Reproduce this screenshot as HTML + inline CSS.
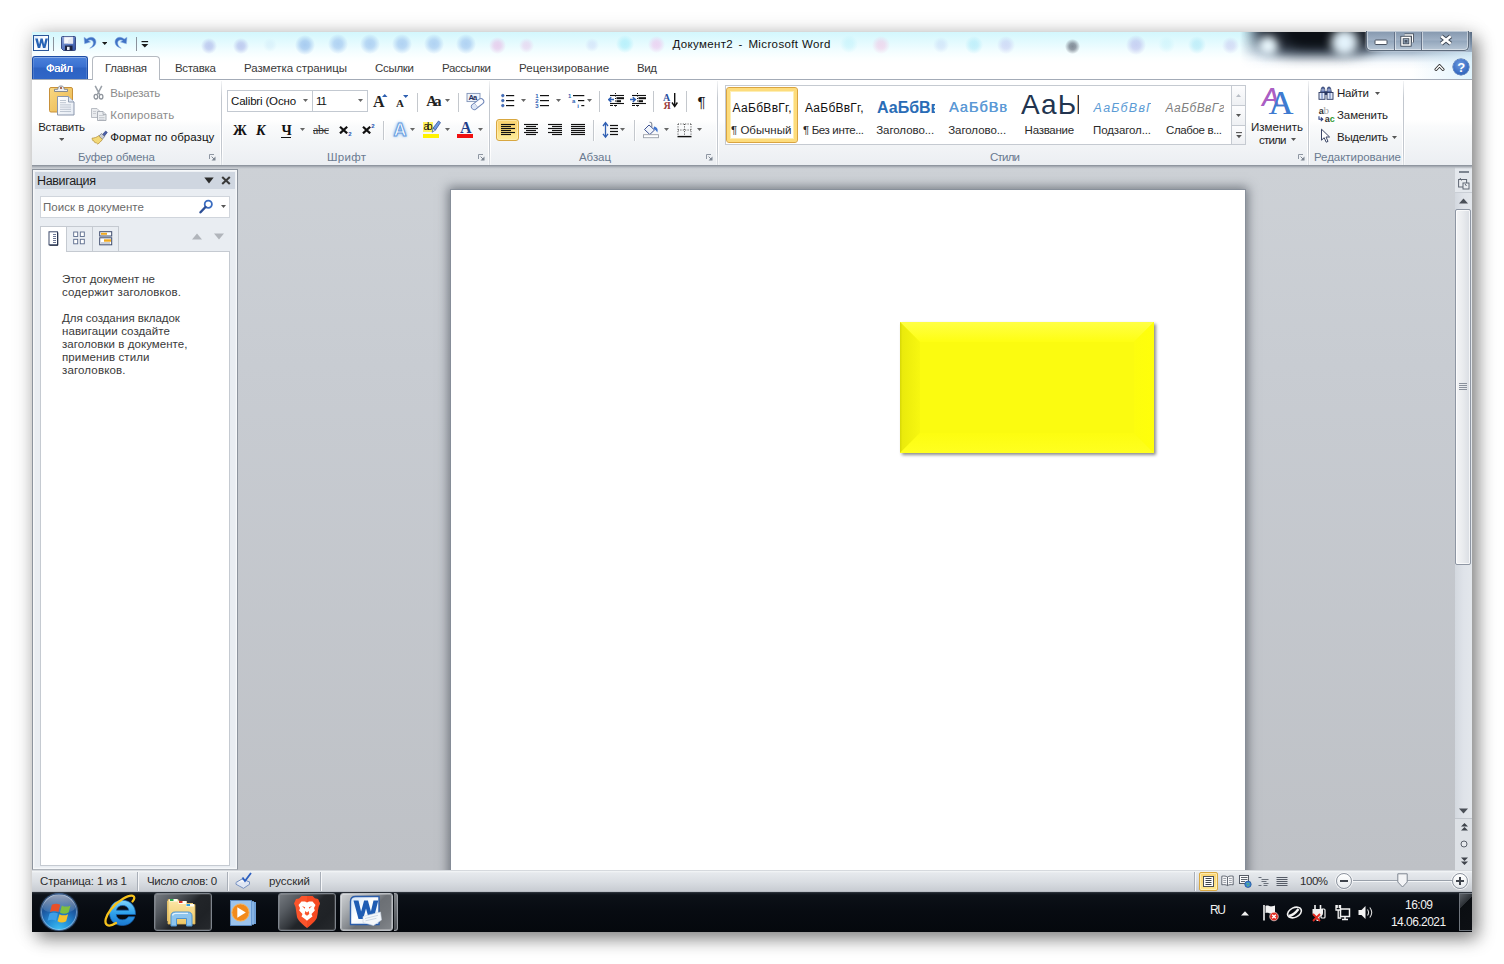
<!DOCTYPE html>
<html lang="ru"><head><meta charset="utf-8"><title>Документ2 - Microsoft Word</title>
<style>
html,body{margin:0;padding:0;}
body{width:1504px;height:964px;overflow:hidden;background:#fff;position:relative;font-family:"Liberation Sans",sans-serif;font-size:12px;}
.b{position:absolute;box-sizing:border-box;display:block;}
.t{position:absolute;white-space:nowrap;line-height:1;display:block;}

#shadow{left:32px;top:32px;width:1440px;height:900px;box-shadow:6px 7px 16px rgba(0,0,0,.42),0 1px 20px rgba(0,0,0,.17);background:#fff;}
#title{left:32px;top:32px;width:1440px;height:48px;overflow:hidden;
 background:linear-gradient(#d3f7fd 0,#e1fafe 9px,#f1fdff 18px,#fcffff 26px,#ffffff 32px,#ffffff 48px);}
.dot{position:absolute;border-radius:50%;}
#ribbon{left:32px;top:79px;width:1440px;height:86px;background:linear-gradient(#ffffff 0,#ffffff 40px,#fafbfc 46px,#f3f5f7 62px,#ebeef2 86px);border-top:1px solid #a3abb7;}
#work{left:32px;top:165px;width:1440px;height:705px;background:linear-gradient(#cdd1d6 0,#c8ccd2 200px,#bec1c6 705px);overflow:hidden;}
#workshadow{left:32px;top:165px;width:1440px;height:4px;background:linear-gradient(#868d97 0,#9aa0a9 1px,#b3b8bf 2px,rgba(190,195,201,.6) 3px,rgba(200,204,210,0) 4px);}
#status{left:32px;top:870px;width:1440px;height:22px;background:linear-gradient(#b8bdc4 0,#f4f6f8 1px,#e6e9ed 3px,#d9dde2 12px,#c8ccd2 21px,#aab0b8 22px);}
#task{left:32px;top:892px;width:1440px;height:40px;background:linear-gradient(#3a4048 0,#1b2129 1px,#0c1118 3px,#070b11 20px,#05080d 40px);}


#cap{left:1366px;top:31px;width:103px;height:20px;border:1px solid #5d6b7c;border-top:none;border-radius:0 0 5px 5px;
 background:linear-gradient(#8497ae 0,#9fb0c4 9px,#93a6bc 10px,#b3c2d2 18px);box-shadow:0 0 2px rgba(255,255,255,.8),inset 0 0 0 1px rgba(255,255,255,.45);}

#help{left:1453px;top:59px;width:16px;height:16px;border-radius:50%;background:radial-gradient(circle at 45% 35%,#6f9be0 0,#3b6fc4 60%,#2a58a8 100%);box-shadow:0 0 0 .5px #2c5196;}

#file{left:32px;top:56px;width:56px;height:23px;border-radius:3px 3px 0 0;border:1px solid #1d4ea5;border-bottom:none;
 background:linear-gradient(#4a81db 0,#3a70d0 10px,#2d62c2 11px,#3067c8 24px);box-shadow:inset 0 1px 0 rgba(255,255,255,.35),inset 1px 0 0 rgba(255,255,255,.15),inset -1px 0 0 rgba(255,255,255,.15);}
#home{left:92px;top:56px;width:68px;height:24px;border:1px solid #b5bac1;border-bottom:none;border-radius:4px 4px 0 0;background:#fff;}

.combo{background:#fff;border:1px solid #c3c9d1;}
#alsel{left:496px;top:119px;width:23px;height:22px;border:1px solid #d8a740;border-radius:3px;background:linear-gradient(#fcd472 0,#fcd877 45%,#fde387 60%,#fdec9b 100%);box-shadow:inset 0 0 0 1px rgba(255,240,190,.6);}

#gal{left:725px;top:85px;width:507px;height:60px;background:#fff;border:1px solid #c5cad1;}
#galsel{left:726px;top:87px;width:72px;height:56px;border:1px solid #d9a440;border-radius:3px;background:#fff;box-shadow:inset 0 0 0 3px #fddc7c,inset 0 0 0 4px #fdeeb5;}
.gsb{background:linear-gradient(#fdfdfe,#eef0f3);border:1px solid #c5cad1;}


#nav{left:32px;top:169px;width:206px;height:701px;background:#e9edf2;border:1px solid #8d949e;border-bottom:1px solid #aeb3ba;box-shadow:inset 0 0 0 1px #f6f8fa,inset 0 0 0 2px #eef1f5;}
#navhead{left:35px;top:172px;width:200px;height:17px;background:#cfd6e0;}
#navsearch{left:40px;top:196px;width:190px;height:22px;background:#fff;border:1px solid #d0d5dc;}
#navbody{left:40px;top:251px;width:190px;height:615px;background:#fff;border:1px solid #c5cad1;}
.ntab{border:1px solid #c5cad1;border-bottom:none;background:#e9edf2;}
#page{left:451px;top:190px;width:794px;height:700px;background:#fff;box-shadow:0 0 0 1px rgba(132,140,152,.75),0 0 10px 3px rgba(60,66,76,.6);}
#shape{left:900px;top:322px;width:253.5px;height:131px;background:#fbfb10;box-shadow:2px 2px 3px rgba(0,0,0,.45);overflow:hidden;}
#vsb{left:1455px;top:166px;width:17px;height:704px;background:linear-gradient(90deg,#d3d8df 0,#dfe3e9 50%,#e3e7ec 100%);}
#vthumb{left:1455px;top:209px;width:16px;height:356px;border:1px solid #8e96a3;border-radius:2px;background:linear-gradient(90deg,#f4f5f7 0,#e9ebee 50%,#d9dde3 100%);box-shadow:inset 0 0 0 1px rgba(255,255,255,.7);}

#vsel{left:1199px;top:872px;width:19px;height:19px;border:1px solid #d8a740;border-radius:2px;background:linear-gradient(#fcd574,#fde790);box-shadow:inset 0 0 0 1px rgba(255,244,200,.7);}
.zc{width:16px;height:16px;border-radius:50%;border:1px solid #8d949f;background:linear-gradient(#ffffff,#e7eaee);box-shadow:0 0 0 1px rgba(255,255,255,.7);}

.tb{border:1px solid #7e848c;border-radius:3px;background:linear-gradient(135deg,#767b81 0,#555a60 24%,#33373c 44%,#222529 52%,#1f2226 75%,#26292d 100%);box-shadow:inset 0 0 0 1px rgba(255,255,255,.12);}
.tba{border:1px solid #b9bdc2;border-radius:3px;background:linear-gradient(135deg,#cdd0d3 0,#a8acb0 25%,#84888d 45%,#6c7075 54%,#71757a 75%,#83878c 100%);box-shadow:inset 0 0 0 1px rgba(255,255,255,.3);}
#orb{left:41px;top:894px;width:36px;height:36px;border-radius:50%;background:radial-gradient(circle at 50% 100%,#3fc0f2 0,#2590d8 28%,#1d5ea8 55%,#173a72 80%,#12305f 100%);box-shadow:0 0 0 1px #3d5f8c,0 0 3px rgba(120,170,230,.6),inset 0 0 0 1px rgba(190,220,250,.5);overflow:hidden;}
#orb i{position:absolute;left:2px;top:1px;width:32px;height:17px;border-radius:16px 16px 10px 10px/16px 16px 5px 5px;background:linear-gradient(rgba(255,255,255,.55),rgba(255,255,255,.1));}

</style></head><body>
<div class="b" id="shadow"></div>
<div class="b" id="title"><i class="dot" style="left:168.5px;top:5.5px;width:16px;height:16px;background:radial-gradient(circle,rgba(180,192,236,0.8) 0,rgba(180,192,236,0.68) 30%,rgba(180,192,236,0.32) 52%,rgba(180,192,236,0) 72%)"></i><i class="dot" style="left:200.5px;top:5.5px;width:16px;height:16px;background:radial-gradient(circle,rgba(180,192,236,0.8) 0,rgba(180,192,236,0.68) 30%,rgba(180,192,236,0.32) 52%,rgba(180,192,236,0) 72%)"></i><i class="dot" style="left:231px;top:6px;width:14px;height:14px;background:radial-gradient(circle,rgba(207,234,248,0.5) 0,rgba(207,234,248,0.425) 30%,rgba(207,234,248,0.2) 52%,rgba(207,234,248,0) 72%)"></i><i class="dot" style="left:262.7px;top:2.5px;width:20px;height:20px;background:radial-gradient(circle,rgba(156,195,238,0.85) 0,rgba(156,195,238,0.7225) 30%,rgba(156,195,238,0.34) 52%,rgba(156,195,238,0) 72%)"></i><i class="dot" style="left:295.6px;top:2px;width:20px;height:20px;background:radial-gradient(circle,rgba(164,201,240,0.82) 0,rgba(164,201,240,0.697) 30%,rgba(164,201,240,0.328) 52%,rgba(164,201,240,0) 72%)"></i><i class="dot" style="left:327.5px;top:2px;width:20px;height:20px;background:radial-gradient(circle,rgba(164,201,240,0.82) 0,rgba(164,201,240,0.697) 30%,rgba(164,201,240,0.328) 52%,rgba(164,201,240,0) 72%)"></i><i class="dot" style="left:359.8px;top:2px;width:20px;height:20px;background:radial-gradient(circle,rgba(164,201,240,0.82) 0,rgba(164,201,240,0.697) 30%,rgba(164,201,240,0.328) 52%,rgba(164,201,240,0) 72%)"></i><i class="dot" style="left:391.7px;top:2px;width:20px;height:20px;background:radial-gradient(circle,rgba(164,201,240,0.82) 0,rgba(164,201,240,0.697) 30%,rgba(164,201,240,0.328) 52%,rgba(164,201,240,0) 72%)"></i><i class="dot" style="left:424.2px;top:2px;width:20px;height:20px;background:radial-gradient(circle,rgba(164,201,240,0.82) 0,rgba(164,201,240,0.697) 30%,rgba(164,201,240,0.328) 52%,rgba(164,201,240,0) 72%)"></i><i class="dot" style="left:456.5px;top:5px;width:17px;height:17px;background:radial-gradient(circle,rgba(230,198,234,0.8) 0,rgba(230,198,234,0.68) 30%,rgba(230,198,234,0.32) 52%,rgba(230,198,234,0) 72%)"></i><i class="dot" style="left:487.1px;top:6px;width:15px;height:15px;background:radial-gradient(circle,rgba(230,208,238,0.7) 0,rgba(230,208,238,0.595) 30%,rgba(230,208,238,0.28) 52%,rgba(230,208,238,0) 72%)"></i><i class="dot" style="left:553px;top:6px;width:14px;height:14px;background:radial-gradient(circle,rgba(205,220,247,0.6) 0,rgba(205,220,247,0.51) 30%,rgba(205,220,247,0.24) 52%,rgba(205,220,247,0) 72%)"></i><i class="dot" style="left:584px;top:3px;width:18px;height:18px;background:radial-gradient(circle,rgba(174,238,250,0.8) 0,rgba(174,238,250,0.68) 30%,rgba(174,238,250,0.32) 52%,rgba(174,238,250,0) 72%)"></i><i class="dot" style="left:615.5px;top:4px;width:17px;height:17px;background:radial-gradient(circle,rgba(236,204,240,0.8) 0,rgba(236,204,240,0.68) 30%,rgba(236,204,240,0.32) 52%,rgba(236,204,240,0) 72%)"></i><i class="dot" style="left:807.5px;top:3px;width:18px;height:18px;background:radial-gradient(circle,rgba(184,240,250,0.5) 0,rgba(184,240,250,0.425) 30%,rgba(184,240,250,0.2) 52%,rgba(184,240,250,0) 72%)"></i><i class="dot" style="left:839.5px;top:4px;width:18px;height:18px;background:radial-gradient(circle,rgba(240,196,228,0.6) 0,rgba(240,196,228,0.51) 30%,rgba(240,196,228,0.24) 52%,rgba(240,196,228,0) 72%)"></i><i class="dot" style="left:900.6px;top:5px;width:16px;height:16px;background:radial-gradient(circle,rgba(194,214,245,0.5) 0,rgba(194,214,245,0.425) 30%,rgba(194,214,245,0.2) 52%,rgba(194,214,245,0) 72%)"></i><i class="dot" style="left:933px;top:3.5px;width:18px;height:18px;background:radial-gradient(circle,rgba(168,232,248,0.6) 0,rgba(168,232,248,0.51) 30%,rgba(168,232,248,0.24) 52%,rgba(168,232,248,0) 72%)"></i><i class="dot" style="left:965px;top:4px;width:18px;height:18px;background:radial-gradient(circle,rgba(194,200,242,0.6) 0,rgba(194,200,242,0.51) 30%,rgba(194,200,242,0.24) 52%,rgba(194,200,242,0) 72%)"></i><i class="dot" style="left:1032.5px;top:6.5px;width:15px;height:15px;background:radial-gradient(circle,rgba(95,103,117,0.75) 0,rgba(95,103,117,0.6375) 30%,rgba(95,103,117,0.3) 52%,rgba(95,103,117,0) 72%)"></i><i class="dot" style="left:1094px;top:3px;width:20px;height:20px;background:radial-gradient(circle,rgba(182,186,236,0.65) 0,rgba(182,186,236,0.5525) 30%,rgba(182,186,236,0.26) 52%,rgba(182,186,236,0) 72%)"></i><i class="dot" style="left:1125.5px;top:3.5px;width:17px;height:17px;background:radial-gradient(circle,rgba(196,241,250,0.5) 0,rgba(196,241,250,0.425) 30%,rgba(196,241,250,0.2) 52%,rgba(196,241,250,0) 72%)"></i><i class="dot" style="left:1156px;top:3.5px;width:18px;height:18px;background:radial-gradient(circle,rgba(168,230,246,0.6) 0,rgba(168,230,246,0.51) 30%,rgba(168,230,246,0.24) 52%,rgba(168,230,246,0) 72%)"></i><i class="dot" style="left:1189.5px;top:5px;width:17px;height:17px;background:radial-gradient(circle,rgba(198,202,240,0.6) 0,rgba(198,202,240,0.51) 30%,rgba(198,202,240,0.24) 52%,rgba(198,202,240,0) 72%)"></i><i class="dot" style="left:1208px;top:0;width:232px;height:40px;border-radius:0;background:linear-gradient(rgba(84,102,126,.97) 0,rgba(112,132,158,.92) 12px,rgba(140,160,184,.85) 19px,rgba(185,202,220,.62) 25px,rgba(228,238,248,.32) 31px,rgba(255,255,255,0) 37px);-webkit-mask-image:linear-gradient(90deg,transparent 0,#000 26px);mask-image:linear-gradient(90deg,transparent 0,#000 26px)"></i><i class="dot" style="left:1226px;top:-22px;width:122px;height:44px;background:#1c222b;border-radius:35%;filter:blur(7px)"></i><i class="dot" style="left:1254px;top:-20px;width:62px;height:34px;background:#0b0f15;border-radius:35%;filter:blur(4px)"></i><i class="dot" style="left:1226px;top:4px;width:20px;height:20px;background:#eaf8fe;filter:blur(4px)"></i><i class="dot" style="left:1299px;top:-3px;width:27px;height:27px;background:#e4f3fc;filter:blur(5px)"></i><i class="dot" style="left:1380px;top:20px;width:60px;height:28px;border-radius:0;background:linear-gradient(90deg,rgba(215,240,252,0),rgba(215,240,252,.75))"></i></div>
<div class="b" id="ribbon"></div>
<div class="b" id="work"></div>
<div class="b" id="workshadow"></div>
<svg class="b" style="left:33px;top:35px;" width="16" height="16" viewBox="0 0 16 16"><defs><linearGradient id="wg" x1="0" y1="0" x2="1" y2="1"><stop offset="0" stop-color="#dcebfb"/><stop offset=".5" stop-color="#ffffff"/><stop offset="1" stop-color="#e8f0fa"/></linearGradient></defs>
<rect x=".5" y=".5" width="15" height="15" fill="url(#wg)" stroke="#2a5699" stroke-width="1"/>
<path d="M2.2 3.6h2.6l1.3 6 1.4-6h2.2l1.4 6 1.3-6h2.5l-2.5 9.4H10L8.6 7.4 7.2 13H4.8z" fill="#2763b5"/></svg>
<div class="b " style="left:53px;top:37px;width:1px;height:14px;background:#8a929c;"></div>
<svg class="b" style="left:61px;top:36px;" width="15" height="15" viewBox="0 0 15 15"><defs><linearGradient id="sv" x1="0" y1="0" x2="1" y2="1"><stop offset="0" stop-color="#8ba4dc"/><stop offset="1" stop-color="#2b4fa3"/></linearGradient></defs>
<path d="M.5 1.5a1 1 0 0 1 1-1h12a1 1 0 0 1 1 1v12a1 1 0 0 1-1 1h-11l-2-2z" fill="url(#sv)" stroke="#2e3f7a" stroke-width=".9"/>
<rect x="3" y="1" width="9" height="6.6" fill="#f6f8fc"/><path d="M3 1h9v6.600H3z" fill="none" stroke="#b8c2dc" stroke-width=".5"/>
<path d="M7 4l5-3v6.600H7z" fill="#dfe4ef" opacity=".7"/>
<rect x="4" y="9.600" width="7.500" height="4.900" fill="#1b2340"/><rect x="6" y="10.800" width="2.600" height="3.200" fill="#e8ecf4"/></svg>
<svg class="b" style="left:83px;top:36px;" width="14" height="13" viewBox="0 0 14 13"><path d="M1 1.200l.6 6.600 6-1.800-2.300-1.500c2.200-1.300 5-.3 5 2.500 0 2.200-1.500 3.900-3.600 5.200 4-.9 6.300-3.400 6.300-6.300C13 1.600 8 -.4 3.700 2.900z" fill="#3f72c4" stroke="#8fb2e6" stroke-width=".5"/></svg>
<svg class="b" style="left:101.8px;top:41.7px;" width="5.4" height="3" viewBox="0 0 5.4 3"><path d="M0 0H5.4 L2.7 3Z" fill="#1a1a1a"/></svg>
<svg class="b" style="left:114px;top:36px;" width="14" height="13" viewBox="0 0 14 13"><path d="M13 1.200l-.6 6.600-6-1.800 2.300-1.500c-2.200-1.300-5-.3-5 2.500 0 2.200 1.500 3.900 3.600 5.200C3.300 11.300 1 8.800 1 5.900 1 1.600 6 -.4 10.300 2.900z" fill="#3f72c4" stroke="#8fb2e6" stroke-width=".5"/></svg>
<div class="b " style="left:136px;top:37px;width:1px;height:14px;background:#8a929c;"></div>
<svg class="b" style="left:141px;top:40px;" width="8" height="8" viewBox="0 0 8 8"><rect x=".5" y="1" width="6.600" height="1.200" fill="#1a1a1a"/><path d="M.3 4h7L3.800 7.400z" fill="#1a1a1a"/></svg>
<span class="t " style="left:672.6px;top:39px;font-size:11.5px;color:#111;letter-spacing:0.328px;">Документ2</span>
<span class="t " style="left:738.6px;top:39px;font-size:11.5px;color:#111;">-</span>
<span class="t " style="left:748.4px;top:39px;font-size:11.5px;color:#111;letter-spacing:0.375px;">Microsoft Word</span>
<div class="b" id="cap"></div>
<div class="b " style="left:1394px;top:32px;width:1px;height:18px;background:#66748a;"></div>
<div class="b " style="left:1395px;top:32px;width:1px;height:18px;background:rgba(255,255,255,.5);"></div>
<div class="b " style="left:1421px;top:32px;width:1px;height:18px;background:#66748a;"></div>
<div class="b " style="left:1422px;top:32px;width:1px;height:18px;background:rgba(255,255,255,.5);"></div>
<svg class="b" style="left:1374px;top:39px;" width="14" height="7" viewBox="0 0 14 7"><rect x="1" y="1" width="12" height="4.500" rx=".8" fill="#fff" stroke="#4a5361" stroke-width="1"/></svg>
<svg class="b" style="left:1400px;top:33px;" width="14" height="14" viewBox="0 0 14 14"><path d="M4.500 2h8v7.500" fill="none" stroke="#3f4856" stroke-width="3"/><path d="M4.500 2h8v7.500" fill="none" stroke="#fff" stroke-width="1.300"/>
<rect x="2" y="4.500" width="8" height="7.500" fill="none" stroke="#3f4856" stroke-width="3.200"/><rect x="2" y="4.500" width="8" height="7.500" fill="none" stroke="#fff" stroke-width="1.500"/>
<rect x="4.600" y="7" width="2.800" height="2.600" fill="#4d5766"/></svg>
<svg class="b" style="left:1439px;top:34px;" width="14" height="12" viewBox="0 0 14 12"><path d="M2.300 2.200l9.400 7.600M11.700 2.200l-9.400 7.600" stroke="#3f4856" stroke-width="4.600"/><path d="M2.300 2.200l9.400 7.600M11.700 2.200l-9.400 7.600" stroke="#fff" stroke-width="2.700"/></svg>
<svg class="b" style="left:1434px;top:63px;" width="11" height="9" viewBox="0 0 11 9"><path d="M2 6.500l3.500-3.800 3.500 3.800" fill="none" stroke="#2a2a2a" stroke-width="3" stroke-linejoin="round" stroke-linecap="round"/><path d="M2 6.500l3.500-3.800 3.500 3.800" fill="none" stroke="#fff" stroke-width="1.300" stroke-linejoin="round" stroke-linecap="round"/></svg>
<div class="b" id="help"></div>
<span class="t " style="left:1457.2px;top:61px;font-size:13px;color:#fff;font-weight:bold;">?</span>
<div class="b" id="file"></div>
<div class="b" id="home"></div>
<span class="t " style="left:46.0px;top:63px;font-size:11.5px;color:#fff;letter-spacing:-0.417px;text-shadow:0 0 .6px #fff;">Файл</span>
<span class="t " style="left:105.0px;top:63px;font-size:11.5px;color:#3a3a3a;letter-spacing:-0.292px;">Главная</span>
<span class="t " style="left:175.0px;top:63px;font-size:11.5px;color:#3a3a3a;letter-spacing:-0.312px;">Вставка</span>
<span class="t " style="left:244.0px;top:63px;font-size:11.5px;color:#3a3a3a;letter-spacing:-0.086px;">Разметка страницы</span>
<span class="t " style="left:375.0px;top:63px;font-size:11.5px;color:#3a3a3a;letter-spacing:-0.300px;">Ссылки</span>
<span class="t " style="left:442.0px;top:63px;font-size:11.5px;color:#3a3a3a;letter-spacing:-0.375px;">Рассылки</span>
<span class="t " style="left:519.0px;top:63px;font-size:11.5px;color:#3a3a3a;letter-spacing:0.096px;">Рецензирование</span>
<span class="t " style="left:637.0px;top:63px;font-size:11.5px;color:#3a3a3a;letter-spacing:-0.375px;">Вид</span>
<div class="b " style="left:220px;top:81px;width:1px;height:84px;background:linear-gradient(rgba(255,255,255,.2),#fff 20%,#fff 85%,rgba(255,255,255,.4));"></div>
<div class="b " style="left:221px;top:81px;width:1px;height:84px;background:linear-gradient(rgba(196,201,208,.2),#c3c8cf 20%,#c3c8cf 85%,rgba(196,201,208,.4));"></div>
<div class="b " style="left:222px;top:81px;width:1px;height:84px;background:linear-gradient(rgba(255,255,255,.2),#fff 20%,#fff 85%,rgba(255,255,255,.4));"></div>
<div class="b " style="left:488px;top:81px;width:1px;height:84px;background:linear-gradient(rgba(255,255,255,.2),#fff 20%,#fff 85%,rgba(255,255,255,.4));"></div>
<div class="b " style="left:489px;top:81px;width:1px;height:84px;background:linear-gradient(rgba(196,201,208,.2),#c3c8cf 20%,#c3c8cf 85%,rgba(196,201,208,.4));"></div>
<div class="b " style="left:490px;top:81px;width:1px;height:84px;background:linear-gradient(rgba(255,255,255,.2),#fff 20%,#fff 85%,rgba(255,255,255,.4));"></div>
<div class="b " style="left:716px;top:81px;width:1px;height:84px;background:linear-gradient(rgba(255,255,255,.2),#fff 20%,#fff 85%,rgba(255,255,255,.4));"></div>
<div class="b " style="left:717px;top:81px;width:1px;height:84px;background:linear-gradient(rgba(196,201,208,.2),#c3c8cf 20%,#c3c8cf 85%,rgba(196,201,208,.4));"></div>
<div class="b " style="left:718px;top:81px;width:1px;height:84px;background:linear-gradient(rgba(255,255,255,.2),#fff 20%,#fff 85%,rgba(255,255,255,.4));"></div>
<div class="b " style="left:1307px;top:81px;width:1px;height:84px;background:linear-gradient(rgba(255,255,255,.2),#fff 20%,#fff 85%,rgba(255,255,255,.4));"></div>
<div class="b " style="left:1308px;top:81px;width:1px;height:84px;background:linear-gradient(rgba(196,201,208,.2),#c3c8cf 20%,#c3c8cf 85%,rgba(196,201,208,.4));"></div>
<div class="b " style="left:1309px;top:81px;width:1px;height:84px;background:linear-gradient(rgba(255,255,255,.2),#fff 20%,#fff 85%,rgba(255,255,255,.4));"></div>
<div class="b " style="left:1402px;top:81px;width:1px;height:84px;background:linear-gradient(rgba(255,255,255,.2),#fff 20%,#fff 85%,rgba(255,255,255,.4));"></div>
<div class="b " style="left:1403px;top:81px;width:1px;height:84px;background:linear-gradient(rgba(196,201,208,.2),#c3c8cf 20%,#c3c8cf 85%,rgba(196,201,208,.4));"></div>
<div class="b " style="left:1404px;top:81px;width:1px;height:84px;background:linear-gradient(rgba(255,255,255,.2),#fff 20%,#fff 85%,rgba(255,255,255,.4));"></div>
<span class="t " style="left:78.0px;top:152px;font-size:11.5px;color:#6a7a90;letter-spacing:-0.114px;">Буфер обмена</span>
<span class="t " style="left:327.0px;top:152px;font-size:11.5px;color:#6a7a90;letter-spacing:0.281px;">Шрифт</span>
<span class="t " style="left:579.0px;top:152px;font-size:11.5px;color:#6a7a90;letter-spacing:-0.062px;">Абзац</span>
<span class="t " style="left:990.0px;top:152px;font-size:11.5px;color:#6a7a90;letter-spacing:-0.781px;">Стили</span>
<span class="t " style="left:1314.0px;top:152px;font-size:11.5px;color:#6a7a90;letter-spacing:-0.048px;">Редактирование</span>
<svg class="b" style="left:209px;top:154px;" width="7" height="7" viewBox="0 0 7 7"><path d="M.5 5V.5H5" fill="none" stroke="#8e96a2" stroke-width="1"/><path d="M6.500 2.500v4h-4z" fill="#7d8591"/><path d="M2.600 2.600l2.400 2.400" stroke="#7d8591" stroke-width="1"/></svg>
<svg class="b" style="left:478px;top:154px;" width="7" height="7" viewBox="0 0 7 7"><path d="M.5 5V.5H5" fill="none" stroke="#8e96a2" stroke-width="1"/><path d="M6.500 2.500v4h-4z" fill="#7d8591"/><path d="M2.600 2.600l2.400 2.400" stroke="#7d8591" stroke-width="1"/></svg>
<svg class="b" style="left:705.5px;top:154px;" width="7" height="7" viewBox="0 0 7 7"><path d="M.5 5V.5H5" fill="none" stroke="#8e96a2" stroke-width="1"/><path d="M6.500 2.500v4h-4z" fill="#7d8591"/><path d="M2.600 2.600l2.400 2.400" stroke="#7d8591" stroke-width="1"/></svg>
<svg class="b" style="left:1297.5px;top:154px;" width="7" height="7" viewBox="0 0 7 7"><path d="M.5 5V.5H5" fill="none" stroke="#8e96a2" stroke-width="1"/><path d="M6.500 2.500v4h-4z" fill="#7d8591"/><path d="M2.600 2.600l2.400 2.400" stroke="#7d8591" stroke-width="1"/></svg>
<svg class="b" style="left:47px;top:84px;" width="30" height="33" viewBox="0 0 30 33"><defs><linearGradient id="cb" x1="0" y1="0" x2="1" y2="1"><stop offset="0" stop-color="#f9d983"/><stop offset="1" stop-color="#eab54c"/></linearGradient>
<linearGradient id="pp" x1="0" y1="0" x2="1" y2="1"><stop offset="0" stop-color="#ffffff"/><stop offset="1" stop-color="#e4eaf3"/></linearGradient></defs>
<rect x="2.500" y="3.500" width="23" height="24.500" rx="1.500" fill="url(#cb)" stroke="#c8913a" stroke-width="1"/>
<path d="M7.500 7.500v-2.200h3.200c.3-2.300 1.300-3.300 3.300-3.300s3 1 3.300 3.300h3.200v2.200z" fill="#eef0f3" stroke="#7a818c" stroke-width=".9"/>
<circle cx="14" cy="4" r="1.100" fill="#9a4a33"/>
<path d="M10.500 12.500h11l5.500 5.500v13h-16.500z" fill="url(#pp)" stroke="#8b97ad" stroke-width="1"/>
<path d="M21.500 12.500v5.500h5.500" fill="#dfe6f1" stroke="#8b97ad" stroke-width=".9"/>
<path d="M13 16.500h6M13 18.700h6M13 20.900h11M13 23.100h11M13 25.300h11M13 27.500h11" stroke="#b7bfcc" stroke-width=".9"/></svg>
<span class="t " style="left:38.2px;top:122px;font-size:11.5px;color:#1e1e1e;letter-spacing:-0.279px;">Вставить</span>
<svg class="b" style="left:58.75px;top:138.1px;" width="5.5" height="3" viewBox="0 0 5.5 3"><path d="M0 0H5.5 L2.75 3Z" fill="#555"/></svg>
<svg class="b" style="left:93px;top:85px;" width="11" height="15" viewBox="0 0 11 15"><path d="M2.200 .8L6.700 9.600M8.800 .8L4.300 9.600" stroke="#9aa0a8" stroke-width="1.500" fill="none"/>
<ellipse cx="2.900" cy="11.700" rx="1.800" ry="2.300" fill="none" stroke="#8f959d" stroke-width="1.300"/><ellipse cx="8.100" cy="11.700" rx="1.800" ry="2.300" fill="none" stroke="#8f959d" stroke-width="1.300"/></svg>
<span class="t " style="left:110.3px;top:88px;font-size:11.5px;color:#8c8c8c;letter-spacing:-0.161px;">Вырезать</span>
<svg class="b" style="left:91px;top:108px;" width="16" height="13" viewBox="0 0 16 13"><path d="M.5 .5h5.500l2.500 2.500v6.500h-8z" fill="#e9ebee" stroke="#b2b7be" stroke-width=".9"/>
<path d="M6.500 3.500h5.500l3 3v6h-8.500z" fill="#eceef1" stroke="#a4a9b1" stroke-width=".9"/><path d="M12 3.500v3h3" fill="#dfe2e6" stroke="#a4a9b1" stroke-width=".8"/>
<path d="M2 3.500h3M2 5.500h3M8 7.500h5.500M8 9.500h5.500M8 11.200h5.500" stroke="#c0c4ca" stroke-width=".8"/></svg>
<span class="t " style="left:110.3px;top:110px;font-size:11.5px;color:#8c8c8c;letter-spacing:0.236px;">Копировать</span>
<svg class="b" style="left:91px;top:129px;" width="17" height="16" viewBox="0 0 17 16"><path d="M10.500 6.500l4.200-4.500 1.600 1.400-3.800 4.800z" fill="#4a5fa8" stroke="#2c3b78" stroke-width=".6"/>
<path d="M7.500 7.300l3-2.800 3.200 3-2.600 3z" fill="#c9ccd3" stroke="#6f7480" stroke-width=".7"/>
<path d="M1 9.200c2.600-.2 4.900-1 6.600-2.400l3.800 3.700c-1.300 1.800-2.900 3.400-4.600 4.600-.9-.5-1.500-1.100-1.900-1.800l-.6.500c-1-.7-1.700-1.500-2-2.400l-.5.200c-.4-.7-.7-1.500-.8-2.400z" fill="#f3d978" stroke="#b08a2e" stroke-width=".7"/></svg>
<span class="t " style="left:110.3px;top:132px;font-size:11.5px;color:#111;letter-spacing:0.055px;">Формат по образцу</span>
<div class="b combo" style="left:227px;top:90px;width:86px;height:22px;"></div>
<div class="b combo" style="left:312px;top:90px;width:56px;height:22px;"></div>
<span class="t " style="left:231.0px;top:96px;font-size:11.5px;color:#111;letter-spacing:-0.167px;">Calibri (Осно</span>
<svg class="b" style="left:302.5px;top:99px;" width="5" height="3" viewBox="0 0 5 3"><path d="M0 0H5 L2.5 3Z" fill="#666"/></svg>
<span class="t " style="left:316.0px;top:96px;font-size:11.5px;color:#111;letter-spacing:-1.000px;">11</span>
<svg class="b" style="left:358px;top:99px;" width="5" height="3" viewBox="0 0 5 3"><path d="M0 0H5 L2.5 3Z" fill="#666"/></svg>
<span class="t " style="left:373.0px;top:94px;font-size:16px;color:#222;font-weight:bold;font-family:'Liberation Serif',serif;">A</span>
<svg class="b" style="left:382px;top:93.5px;" width="5.5" height="3" viewBox="0 0 5.5 3"><path d="M0 3L2.750 0 5.500 3z" fill="#2e5fb0"/></svg>
<span class="t " style="left:396.0px;top:98px;font-size:11px;color:#222;font-weight:bold;font-family:'Liberation Serif',serif;">A</span>
<svg class="b" style="left:402.5px;top:94.7px;" width="5.5" height="3" viewBox="0 0 5.5 3"><path d="M0 0h5.500L2.750 3z" fill="#2e5fb0"/></svg>
<div class="b " style="left:417px;top:93px;width:1px;height:19px;background:#c4c8cd;"></div>
<div class="b " style="left:418px;top:93px;width:1px;height:19px;background:#ffffff;"></div>
<span class="t " style="left:426.3px;top:94px;font-size:15px;color:#222;letter-spacing:-3.175px;font-weight:bold;font-family:'Liberation Serif',serif;">Aa</span>
<svg class="b" style="left:445px;top:99px;" width="5" height="3" viewBox="0 0 5 3"><path d="M0 0H5 L2.5 3Z" fill="#666"/></svg>
<div class="b " style="left:458px;top:93px;width:1px;height:19px;background:#c4c8cd;"></div>
<div class="b " style="left:459px;top:93px;width:1px;height:19px;background:#ffffff;"></div>
<svg class="b" style="left:466px;top:92px;" width="19" height="19" viewBox="0 0 19 19"><rect x="1" y="1.400" width="13" height="8.200" fill="#eef3fb" stroke="#7f93b8" stroke-width=".9"/>
<g transform="rotate(-38 11.500 12)"><rect x="4.500" y="9.300" width="14" height="5.600" rx="2.600" fill="#fdfdff" stroke="#6f86b8" stroke-width="1"/><path d="M9.500 9.500v5.200" stroke="#8fa2c8" stroke-width=".8"/><rect x="5" y="9.800" width="4.300" height="4.600" rx="2" fill="#dbe5f6"/></g></svg>
<span class="t " style="left:468.6px;top:94px;font-size:7.5px;color:#1f2f5f;letter-spacing:-1.125px;font-weight:bold;">Aa</span>
<span class="t " style="left:233.0px;top:124px;font-size:14px;color:#111;font-weight:bold;font-family:'Liberation Serif',serif;">Ж</span>
<span class="t " style="left:256.1px;top:124px;font-size:14px;color:#111;font-weight:bold;font-style:italic;font-family:'Liberation Serif',serif;">К</span>
<span class="t " style="left:281.5px;top:124px;font-size:14px;color:#111;font-weight:bold;font-family:'Liberation Serif',serif;">Ч</span>
<div class="b " style="left:281px;top:137px;width:10px;height:1px;background:#111;"></div>
<svg class="b" style="left:300px;top:128.1px;" width="5" height="3" viewBox="0 0 5 3"><path d="M0 0H5 L2.5 3Z" fill="#666"/></svg>
<span class="t " style="left:313.0px;top:124px;font-size:12px;color:#333;letter-spacing:-0.312px;font-family:'Liberation Serif',serif;text-decoration:line-through;">abc</span>
<svg class="b" style="left:339px;top:126.3px;" width="9.2" height="8.2" viewBox="0 0 9.2 8.2"><path d="M1 .8l7.200 6.600M8.200 .8L1 7.400" stroke="#111" stroke-width="2.200"/></svg>
<span class="t " style="left:348.3px;top:131px;font-size:6px;color:#2455b0;font-weight:bold;">2</span>
<svg class="b" style="left:362px;top:126.3px;" width="9.2" height="8.2" viewBox="0 0 9.2 8.2"><path d="M1 .8l7.200 6.600M8.200 .8L1 7.400" stroke="#111" stroke-width="2.200"/></svg>
<span class="t " style="left:371.3px;top:123px;font-size:6px;color:#2455b0;font-weight:bold;">2</span>
<div class="b " style="left:383px;top:121px;width:1px;height:19px;background:#c4c8cd;"></div>
<div class="b " style="left:384px;top:121px;width:1px;height:19px;background:#ffffff;"></div>
<span class="t " style="left:393.4px;top:121px;font-size:18px;color:#ffffff;font-weight:bold;-webkit-text-stroke:1px #6a9fe0;text-shadow:0 0 2px #7fb2ee,0 0 3px #8dbcf0,0 0 4px #a9cdf5;">A</span>
<svg class="b" style="left:410px;top:128.1px;" width="5" height="3" viewBox="0 0 5 3"><path d="M0 0H5 L2.5 3Z" fill="#666"/></svg>
<div class="b " style="left:423px;top:134px;width:16px;height:4px;background:#fff200;"></div>
<div class="b " style="left:423px;top:122px;width:10px;height:9.5px;background:#fff35c;"></div>
<span class="t " style="left:423.5px;top:122px;font-size:10px;color:#111;letter-spacing:-2.125px;">ab</span>
<svg class="b" style="left:429.5px;top:119.5px;" width="11" height="14" viewBox="0 0 11 14"><path d="M8.500 1l2 1.600-5 7.400-2.600-1.700z" fill="#6f9be3" stroke="#24468f" stroke-width=".7"/><path d="M2.900 8.300l2.600 1.700-3.300 2.300z" fill="#e8ecf4" stroke="#24468f" stroke-width=".6"/></svg>
<svg class="b" style="left:445px;top:128.1px;" width="5" height="3" viewBox="0 0 5 3"><path d="M0 0H5 L2.5 3Z" fill="#666"/></svg>
<span class="t " style="left:460.0px;top:120px;font-size:16px;color:#1f3f8a;font-weight:bold;font-family:'Liberation Serif',serif;">A</span>
<div class="b " style="left:457px;top:134px;width:16px;height:4px;background:#f01010;"></div>
<svg class="b" style="left:478px;top:128.1px;" width="5" height="3" viewBox="0 0 5 3"><path d="M0 0H5 L2.5 3Z" fill="#666"/></svg>
<svg class="b" style="left:500px;top:92px;" width="16" height="16" viewBox="0 0 16 16"><circle cx="2.800" cy="3.6" r="1.350" fill="#3f6fc3" stroke="#1d3f86" stroke-width=".4"/><path d="M6 3.6H14.2" stroke="#111" stroke-width="1.2"/><circle cx="2.800" cy="8.6" r="1.350" fill="#3f6fc3" stroke="#1d3f86" stroke-width=".4"/><path d="M6 8.6H14.2" stroke="#111" stroke-width="1.2"/><circle cx="2.800" cy="13.6" r="1.350" fill="#3f6fc3" stroke="#1d3f86" stroke-width=".4"/><path d="M6 13.6H14.2" stroke="#111" stroke-width="1.2"/></svg>
<svg class="b" style="left:521px;top:99.1px;" width="5" height="3" viewBox="0 0 5 3"><path d="M0 0H5 L2.5 3Z" fill="#666"/></svg>
<svg class="b" style="left:533px;top:92px;" width="17" height="16" viewBox="0 0 17 16"><path d="M7 3.6H16" stroke="#111" stroke-width="1.2"/><path d="M7 8.6H16" stroke="#111" stroke-width="1.2"/><path d="M7 13.6H16" stroke="#111" stroke-width="1.2"/></svg>
<span class="t " style="left:535.3px;top:93px;font-size:6px;color:#2f5fb3;font-weight:bold;">1</span>
<span class="t " style="left:535.3px;top:98px;font-size:6px;color:#2f5fb3;font-weight:bold;">2</span>
<span class="t " style="left:535.3px;top:103px;font-size:6px;color:#2f5fb3;font-weight:bold;">3</span>
<svg class="b" style="left:556px;top:99.1px;" width="5" height="3" viewBox="0 0 5 3"><path d="M0 0H5 L2.5 3Z" fill="#666"/></svg>
<svg class="b" style="left:566px;top:92px;" width="20" height="18" viewBox="0 0 20 18"><path d="M7 3.6H18.3" stroke="#111" stroke-width="1.2"/><path d="M12 8.6H18.3" stroke="#111" stroke-width="1.2"/><path d="M15.3 13.6H18.3" stroke="#111" stroke-width="1.2"/></svg>
<span class="t " style="left:568.0px;top:93px;font-size:6px;color:#2f5fb3;font-weight:bold;">1</span>
<span class="t " style="left:572.0px;top:98px;font-size:6px;color:#2f5fb3;font-weight:bold;">a</span>
<span class="t " style="left:577.2px;top:103px;font-size:6px;color:#2f5fb3;font-weight:bold;">i</span>
<svg class="b" style="left:586.5px;top:99.1px;" width="5" height="3" viewBox="0 0 5 3"><path d="M0 0H5 L2.5 3Z" fill="#666"/></svg>
<div class="b " style="left:599px;top:91px;width:1px;height:21px;background:#c4c8cd;"></div>
<div class="b " style="left:600px;top:91px;width:1px;height:21px;background:#ffffff;"></div>
<svg class="b" style="left:608px;top:92px;" width="17" height="16" viewBox="0 0 17 16"><path d="M2 3.5H16" stroke="#111" stroke-width="1.1"/><path d="M8.5 6.2H16" stroke="#111" stroke-width="2"/><path d="M8.5 9.2H13" stroke="#111" stroke-width="2"/><path d="M2 11.5H16" stroke="#111" stroke-width="1.1"/><path d="M2 13.500H9" stroke="#111" stroke-width="1.100" stroke-dasharray="3 1"/><path d="M7.500 1v14.500" stroke="#111" stroke-width="1" stroke-dasharray="1 1.500"/><path d="M1.500 7.600h4.500M3.200 5.200L.6 7.600l2.600 2.400" fill="none" stroke="#2f5fb3" stroke-width="1.500"/></svg>
<svg class="b" style="left:630px;top:92px;" width="17" height="16" viewBox="0 0 17 16"><path d="M2 3.5H16" stroke="#111" stroke-width="1.1"/><path d="M8.5 6.2H16" stroke="#111" stroke-width="2"/><path d="M8.5 9.2H13" stroke="#111" stroke-width="2"/><path d="M2 11.5H16" stroke="#111" stroke-width="1.1"/><path d="M2 13.500H9" stroke="#111" stroke-width="1.100" stroke-dasharray="3 1"/><path d="M7.500 1v14.500" stroke="#111" stroke-width="1" stroke-dasharray="1 1.500"/><path d="M0 7.600h4.500M2.800 5.200l2.600 2.400-2.600 2.400" fill="none" stroke="#2f5fb3" stroke-width="1.500"/></svg>
<div class="b " style="left:653px;top:91px;width:1px;height:21px;background:#c4c8cd;"></div>
<div class="b " style="left:654px;top:91px;width:1px;height:21px;background:#ffffff;"></div>
<span class="t " style="left:663.0px;top:93px;font-size:10px;color:#2b50a0;font-weight:bold;font-family:'Liberation Serif',serif;">A</span>
<span class="t " style="left:663.4px;top:101px;font-size:10px;color:#9a3b3b;font-weight:bold;font-family:'Liberation Serif',serif;">Я</span>
<svg class="b" style="left:671px;top:92px;" width="8" height="17" viewBox="0 0 8 17"><path d="M3.700 1v13" stroke="#111" stroke-width="1.400"/><path d="M1 10.500l2.700 4 2.700-4" fill="none" stroke="#111" stroke-width="1.400"/></svg>
<div class="b " style="left:686px;top:91px;width:1px;height:21px;background:#c4c8cd;"></div>
<div class="b " style="left:687px;top:91px;width:1px;height:21px;background:#ffffff;"></div>
<span class="t " style="left:697.5px;top:94px;font-size:15px;color:#1a1a1a;">¶</span>
<div class="b" id="alsel"></div>
<svg class="b" style="left:501px;top:123px;" width="14" height="13" viewBox="0 0 14 13"><path d="M0 1.5H14" stroke="#111" stroke-width="1.15"/><path d="M0 3.5H10" stroke="#111" stroke-width="1.15"/><path d="M0 5.5H14" stroke="#111" stroke-width="1.15"/><path d="M0 7.5H10" stroke="#111" stroke-width="1.15"/><path d="M0 9.5H14" stroke="#111" stroke-width="1.15"/><path d="M0 11.5H10" stroke="#111" stroke-width="1.15"/></svg>
<svg class="b" style="left:524px;top:123px;" width="14" height="13" viewBox="0 0 14 13"><path d="M0 1.5H14" stroke="#111" stroke-width="1.15"/><path d="M2 3.5H12" stroke="#111" stroke-width="1.15"/><path d="M0 5.5H14" stroke="#111" stroke-width="1.15"/><path d="M2 7.5H12" stroke="#111" stroke-width="1.15"/><path d="M0 9.5H14" stroke="#111" stroke-width="1.15"/><path d="M2 11.5H12" stroke="#111" stroke-width="1.15"/></svg>
<svg class="b" style="left:548px;top:123px;" width="14" height="13" viewBox="0 0 14 13"><path d="M0 1.5H14" stroke="#111" stroke-width="1.15"/><path d="M4 3.5H14" stroke="#111" stroke-width="1.15"/><path d="M0 5.5H14" stroke="#111" stroke-width="1.15"/><path d="M4 7.5H14" stroke="#111" stroke-width="1.15"/><path d="M0 9.5H14" stroke="#111" stroke-width="1.15"/><path d="M4 11.5H14" stroke="#111" stroke-width="1.15"/></svg>
<svg class="b" style="left:571px;top:123px;" width="14" height="13" viewBox="0 0 14 13"><path d="M0 1.5H14" stroke="#111" stroke-width="1.15"/><path d="M0 3.5H14" stroke="#111" stroke-width="1.15"/><path d="M0 5.5H14" stroke="#111" stroke-width="1.15"/><path d="M0 7.5H14" stroke="#111" stroke-width="1.15"/><path d="M0 9.5H14" stroke="#111" stroke-width="1.15"/><path d="M0 11.5H14" stroke="#111" stroke-width="1.15"/></svg>
<div class="b " style="left:593px;top:120px;width:1px;height:21px;background:#c4c8cd;"></div>
<div class="b " style="left:594px;top:120px;width:1px;height:21px;background:#ffffff;"></div>
<svg class="b" style="left:602px;top:121px;" width="17" height="18" viewBox="0 0 17 18"><path d="M3.500 2v13.500" stroke="#2f5fb3" stroke-width="1.300"/><path d="M1 5l2.500-3.300 2.500 3.300M1 12.800l2.500 3.300 2.500-3.300" fill="none" stroke="#2f5fb3" stroke-width="1.400"/><path d="M8 4.5H16" stroke="#111" stroke-width="1.2"/><path d="M8 7.5H16" stroke="#111" stroke-width="1.2"/><path d="M8 10.5H16" stroke="#111" stroke-width="1.2"/><path d="M8 13.5H16" stroke="#111" stroke-width="1.2"/></svg>
<svg class="b" style="left:620px;top:128.1px;" width="5" height="3" viewBox="0 0 5 3"><path d="M0 0H5 L2.5 3Z" fill="#666"/></svg>
<div class="b " style="left:634px;top:120px;width:1px;height:21px;background:#c4c8cd;"></div>
<div class="b " style="left:635px;top:120px;width:1px;height:21px;background:#ffffff;"></div>
<svg class="b" style="left:642px;top:121px;" width="19" height="18" viewBox="0 0 19 18"><path d="M7 4l5.500 5-4.700 4.500-5.300-5z" fill="#f1f5fb" stroke="#2a3f86" stroke-width=".9"/>
<path d="M12 5.500c3 .5 4.500 2.500 3.300 6-1-2-2-3-3.800-3.500z" fill="#3f74cf"/>
<path d="M7.500 1.300c1.400-.4 2.300.4 2.300 2v3" fill="none" stroke="#7b8496" stroke-width="1.100"/>
<rect x="1.500" y="13.700" width="15" height="3" fill="#fff" stroke="#9a9fa8" stroke-width=".9"/></svg>
<svg class="b" style="left:664px;top:128.1px;" width="5" height="3" viewBox="0 0 5 3"><path d="M0 0H5 L2.5 3Z" fill="#666"/></svg>
<svg class="b" style="left:677px;top:123px;" width="15" height="15" viewBox="0 0 15 15"><path d="M1 1h13M1 7h13M1 1v12M7.500 1v12M14 1v12" stroke="#444" stroke-width="1" stroke-dasharray="1 1.400" fill="none"/><path d="M.5 13.600h14" stroke="#111" stroke-width="1.400"/></svg>
<svg class="b" style="left:697px;top:128.1px;" width="5" height="3" viewBox="0 0 5 3"><path d="M0 0H5 L2.5 3Z" fill="#666"/></svg>
<div class="b" id="gal"></div><div class="b" id="galsel"></div>
<span class="t " style="left:732.6px;top:102px;font-size:12px;color:#111;letter-spacing:0.297px;">АаБбВвГг,</span>
<span class="t " style="left:805.0px;top:102px;font-size:12px;color:#111;letter-spacing:0.234px;">АаБбВвГг,</span>
<div class="b" style="left:877.0px;top:100px;width:58.0px;height:22px;overflow:hidden"><span class="t " style="left:-0.0px;top:0;font-size:16px;color:#2a6cb6;letter-spacing:0.000px;font-weight:bold;">АаБбВв</span></div>
<span class="t " style="left:949.0px;top:100px;font-size:14.5px;color:#5c9ad6;letter-spacing:0.975px;text-shadow:.3px 0 0 #5c9ad6;">АаБбВв</span>
<div class="b" style="left:1021.0px;top:91px;width:58.0px;height:38px;overflow:hidden"><span class="t " style="left:-0.0px;top:0;font-size:28px;color:#22344f;letter-spacing:1.100px;">АаЫб</span></div>
<div class="b" style="left:1093.0px;top:102px;width:58.0px;height:18px;overflow:hidden"><span class="t " style="left:0.6px;top:0;font-size:12.5px;color:#5b9bd5;letter-spacing:1.200px;font-style:italic;">АаБбВвГ</span></div>
<div class="b" style="left:1165.0px;top:102px;width:59.0px;height:17px;overflow:hidden"><span class="t " style="left:0.6px;top:0;font-size:12px;color:#7f7f7f;letter-spacing:0.450px;font-style:italic;">АаБбВвГг</span></div>
<span class="t " style="left:731.0px;top:125px;font-size:11.5px;color:#2a2a2a;letter-spacing:0.019px;">¶ Обычный</span>
<span class="t " style="left:803.0px;top:125px;font-size:11.5px;color:#2a2a2a;letter-spacing:-0.365px;">¶ Без инте...</span>
<span class="t " style="left:876.2px;top:125px;font-size:11.5px;color:#2a2a2a;letter-spacing:-0.062px;">Заголово...</span>
<span class="t " style="left:948.2px;top:125px;font-size:11.5px;color:#2a2a2a;letter-spacing:-0.062px;">Заголово...</span>
<span class="t " style="left:1024.6px;top:125px;font-size:11.5px;color:#2a2a2a;letter-spacing:-0.268px;">Название</span>
<span class="t " style="left:1093.0px;top:125px;font-size:11.5px;color:#2a2a2a;letter-spacing:-0.113px;">Подзагол...</span>
<span class="t " style="left:1166.0px;top:125px;font-size:11.5px;color:#2a2a2a;letter-spacing:-0.362px;">Слабое в...</span>
<div class="b gsb" style="left:1231px;top:85px;width:15px;height:21px;"></div>
<div class="b gsb" style="left:1231px;top:105px;width:15px;height:21px;"></div>
<div class="b gsb" style="left:1231px;top:125px;width:15px;height:20px;"></div>
<svg class="b" style="left:1236px;top:93.5px;" width="5" height="3" viewBox="0 0 5 3"><path d="M0 3L2.500 0 5 3z" fill="#b9bec6"/></svg>
<svg class="b" style="left:1236px;top:113.5px;" width="5" height="3" viewBox="0 0 5 3"><path d="M0 0H5 L2.5 3Z" fill="#555"/></svg>
<svg class="b" style="left:1235.5px;top:132px;" width="6" height="7" viewBox="0 0 6 7"><path d="M0 .6h6" stroke="#555" stroke-width="1.100"/><path d="M.2 3h5.600L3 6.200z" fill="#555"/></svg>
<span class="t " style="left:1261.5px;top:84px;font-size:26px;color:#ab5fc4;transform:skewX(-8deg);text-shadow:.5px 0 0 #ab5fc4;">A</span>
<span class="t " style="left:1268.5px;top:86px;font-size:34px;color:#3f7bd0;font-family:'Liberation Serif',serif;text-shadow:.4px 0 0 #4a86d8;">A</span>
<span class="t " style="left:1251.0px;top:122px;font-size:11.5px;color:#1e1e1e;letter-spacing:0.018px;">Изменить</span>
<span class="t " style="left:1259.0px;top:135px;font-size:11.5px;color:#1e1e1e;letter-spacing:-0.781px;">стили</span>
<svg class="b" style="left:1291px;top:138px;" width="5" height="3" viewBox="0 0 5 3"><path d="M0 0H5 L2.5 3Z" fill="#555"/></svg>
<svg class="b" style="left:1318px;top:85.5px;" width="16" height="14" viewBox="0 0 16 14"><path d="M2.500 6.500l1-4.500c.2-1.300 2.800-1.300 3 0l.7 4.500zM8.800 6.500l.7-4.500c.2-1.300 2.800-1.300 3 0l1 4.500z" fill="#5a6fa8" stroke="#27355f" stroke-width=".7"/>
<path d="M3.300 4h3.300M9.400 4h3.300" stroke="#dfe6f5" stroke-width=".8"/>
<rect x="1" y="6.500" width="6" height="6.800" fill="#e3e9f6" stroke="#27355f" stroke-width=".9"/><rect x="9" y="6.500" width="6" height="6.800" fill="#e3e9f6" stroke="#27355f" stroke-width=".9"/>
<path d="M4 7v6M12 7v6" stroke="#9fb0d6" stroke-width="2"/>
<rect x="6.800" y="5.300" width="2.400" height="3.600" fill="#27355f"/></svg>
<span class="t " style="left:1337.0px;top:88px;font-size:11.5px;color:#1e1e1e;letter-spacing:-0.219px;">Найти</span>
<svg class="b" style="left:1375px;top:91.5px;" width="5" height="3" viewBox="0 0 5 3"><path d="M0 0H5 L2.5 3Z" fill="#555"/></svg>
<span class="t " style="left:1318.8px;top:107px;font-size:9px;color:#333;font-weight:bold;">a</span>
<span class="t " style="left:1323.6px;top:105px;font-size:11px;color:#a5a5a5;font-family:'Liberation Serif',serif;">b</span>
<span class="t " style="left:1324.8px;top:115px;font-size:9px;color:#333;font-weight:bold;">a</span>
<span class="t " style="left:1329.8px;top:115px;font-size:9px;color:#2e9a2e;font-weight:bold;">c</span>
<svg class="b" style="left:1318px;top:115.5px;" width="6" height="6" viewBox="0 0 6 6"><path d="M1 .3v3h3.500M2.800 1.500l2 1.800-2 1.800" fill="none" stroke="#2b3f80" stroke-width="1.100"/></svg>
<span class="t " style="left:1337.0px;top:110px;font-size:11.5px;color:#1e1e1e;letter-spacing:-0.089px;">Заменить</span>
<svg class="b" style="left:1320px;top:128px;" width="11" height="16" viewBox="0 0 11 16"><path d="M1.500 1.200v11l2.700-2.500 2 4.500 1.800-.8-2-4.400h3.600z" fill="#fff" stroke="#3a4566" stroke-width="1"/></svg>
<span class="t " style="left:1337.0px;top:132px;font-size:11.5px;color:#1e1e1e;letter-spacing:-0.286px;">Выделить</span>
<svg class="b" style="left:1392px;top:135.5px;" width="5" height="3" viewBox="0 0 5 3"><path d="M0 0H5 L2.5 3Z" fill="#555"/></svg>
<div class="b" id="nav"></div><div class="b" id="navhead"></div><div class="b" id="navsearch"></div>
<span class="t " style="left:37.0px;top:175px;font-size:12.5px;color:#1c1c1c;letter-spacing:-0.344px;">Навигация</span>
<svg class="b" style="left:204px;top:176.8px;" width="10" height="7" viewBox="0 0 10 7"><path d="M.3 .5h9.400L5 6.500z" fill="#2b2b2b"/></svg>
<svg class="b" style="left:221px;top:175.5px;" width="10" height="9" viewBox="0 0 10 9"><path d="M1.200 1l7.600 7M8.800 1l-7.600 7" stroke="#3a3a3a" stroke-width="2.100"/></svg>
<span class="t " style="left:43.0px;top:202px;font-size:11.5px;color:#6a6a6a;letter-spacing:0.031px;">Поиск в документе</span>
<svg class="b" style="left:199px;top:199px;" width="15" height="15" viewBox="0 0 15 15"><circle cx="9.300" cy="5.300" r="3.600" fill="#fff" stroke="#3a6cc0" stroke-width="1.800"/><path d="M6.500 8l-5 5.300" stroke="#2d4f96" stroke-width="2.400" stroke-linecap="round"/></svg>
<svg class="b" style="left:221px;top:205px;" width="5" height="3" viewBox="0 0 5 3"><path d="M0 0H5 L2.5 3Z" fill="#555"/></svg>
<div class="b" id="navbody"></div>
<div class="b " style="left:40px;top:226px;width:27px;height:26px;background:#fff;border:1px solid #c5cad1;border-bottom:none;"></div>
<div class="b ntab" style="left:66px;top:226px;width:27px;height:25px;"></div>
<div class="b ntab" style="left:92px;top:226px;width:27px;height:25px;"></div>
<svg class="b" style="left:48px;top:231px;" width="11" height="15" viewBox="0 0 11 15"><rect x="1" y=".8" width="8.500" height="13" fill="#fff" stroke="#3d4a6b" stroke-width="1"/><path d="M5 3.500h3M5 5.500h3M5 7.500h3M5 9.500h3M5 11.500h3" stroke="#5a6788" stroke-width=".9"/><path d="M9.800 1.500v12.800H1.500" stroke="#1f2840" stroke-width="1" fill="none"/></svg>
<svg class="b" style="left:73px;top:231px;" width="13" height="15" viewBox="0 0 13 15"><rect x="0.7" y="1" width="4" height="4.500" fill="#fff" stroke="#5a6a8a" stroke-width=".9"/><rect x="0.7" y="8.3" width="4" height="4.500" fill="#fff" stroke="#5a6a8a" stroke-width=".9"/><rect x="7.3" y="1" width="4" height="4.500" fill="#fff" stroke="#5a6a8a" stroke-width=".9"/><rect x="7.3" y="8.3" width="4" height="4.500" fill="#fff" stroke="#5a6a8a" stroke-width=".9"/></svg>
<svg class="b" style="left:99px;top:231px;" width="14" height="15" viewBox="0 0 14 15"><rect x=".7" y=".7" width="12" height="4.300" fill="#fff" stroke="#3d4a6b" stroke-width="1"/><rect x="2" y="1.800" width="6" height="2" fill="#f0a91f"/><rect x=".7" y="6.800" width="12" height="7" fill="#fff" stroke="#3d4a6b" stroke-width="1"/><rect x="5" y="8.300" width="7" height="2.400" fill="#f0a91f"/><path d="M2 12h9" stroke="#8a93a8" stroke-width=".9"/></svg>
<svg class="b" style="left:192px;top:233px;" width="10" height="7" viewBox="0 0 10 7"><path d="M0 6.500L5 .5l5 6z" fill="#b1b5bb"/></svg>
<svg class="b" style="left:214px;top:233px;" width="10" height="7" viewBox="0 0 10 7"><path d="M0 .5h10L5 6.500z" fill="#b1b5bb"/></svg>
<span class="t " style="left:62.0px;top:274px;font-size:11.5px;color:#3a3a3a;letter-spacing:-0.050px;">Этот документ не</span>
<span class="t " style="left:62.0px;top:287px;font-size:11.5px;color:#3a3a3a;letter-spacing:0.151px;">содержит заголовков.</span>
<span class="t " style="left:62.0px;top:313px;font-size:11.5px;color:#3a3a3a;letter-spacing:-0.053px;">Для создания вкладок</span>
<span class="t " style="left:62.0px;top:326px;font-size:11.5px;color:#3a3a3a;letter-spacing:0.088px;">навигации создайте</span>
<span class="t " style="left:62.0px;top:339px;font-size:11.5px;color:#3a3a3a;letter-spacing:0.054px;">заголовки в документе,</span>
<span class="t " style="left:62.0px;top:352px;font-size:11.5px;color:#3a3a3a;letter-spacing:0.115px;">применив стили</span>
<span class="t " style="left:62.0px;top:365px;font-size:11.5px;color:#3a3a3a;letter-spacing:0.150px;">заголовков.</span>
<div class="b" id="page"></div>
<div class="b" id="shape"><svg width="254" height="131" viewBox="0 0 254 131" style="position:absolute;left:0;top:0">
<defs><linearGradient id="bt" x1="0" y1="0" x2="0" y2="1"><stop offset="0" stop-color="#ffff45"/><stop offset="1" stop-color="#fefe12"/></linearGradient>
<linearGradient id="bl" x1="0" y1="0" x2="1" y2="0"><stop offset="0" stop-color="#d6d608"/><stop offset=".12" stop-color="#eaea0c"/><stop offset="1" stop-color="#f7f710"/></linearGradient>
<linearGradient id="bb" x1="0" y1="0" x2="0" y2="1"><stop offset="0" stop-color="#fdfd10"/><stop offset="1" stop-color="#ffff20"/></linearGradient>
<linearGradient id="br" x1="0" y1="0" x2="1" y2="0"><stop offset="0" stop-color="#fdfd0e"/><stop offset="1" stop-color="#ffff0a"/></linearGradient></defs>
<rect width="254" height="131" fill="#fbfb10"/>
<path d="M0 0H254L234 20H20z" fill="url(#bt)"/><path d="M0 0L20 20V111L0 131z" fill="url(#bl)"/>
<path d="M0 131L20 111H234L254 131z" fill="url(#bb)"/><path d="M254 0V131L234 111V20z" fill="url(#br)"/></svg></div>
<div class="b" id="vsb"></div>
<div class="b " style="left:1455px;top:166px;width:17px;height:26px;background:#e4e8ed;"></div>
<div class="b " style="left:1459px;top:171px;width:10px;height:2px;background:#7d8590;"></div>
<svg class="b" style="left:1458px;top:177px;" width="12" height="13" viewBox="0 0 12 13"><rect x=".6" y="2.500" width="8" height="7.500" fill="#e9ecf0" stroke="#5e6672" stroke-width="1"/><rect x="5" y="6" width="6" height="6" fill="#e9ecf0" stroke="#5e6672" stroke-width="1"/><path d="M2 1l1.500 2.500M7 7l1.500 2" stroke="#5e6672" stroke-width="1"/></svg>
<div class="b " style="left:1455px;top:192px;width:17px;height:1px;background:#c9ced5;"></div>
<svg class="b" style="left:1459px;top:198px;" width="9" height="6" viewBox="0 0 9 6"><path d="M0 5.500L4.500 .5 9 5.500z" fill="#4a4f57"/></svg>
<div class="b" id="vthumb"></div>
<svg class="b" style="left:1459px;top:383px;" width="9" height="8" viewBox="0 0 9 8"><path d="M0 0.5h8" stroke="#8a919c" stroke-width="1"/><path d="M0 2.5h8" stroke="#8a919c" stroke-width="1"/><path d="M0 4.5h8" stroke="#8a919c" stroke-width="1"/><path d="M0 6.5h8" stroke="#8a919c" stroke-width="1"/></svg>
<svg class="b" style="left:1459px;top:807.5px;" width="9" height="6" viewBox="0 0 9 6"><path d="M0 .5h9L4.500 5.500z" fill="#4a4f57"/></svg>
<div class="b " style="left:1455px;top:818px;width:17px;height:1px;background:#c2c7ce;"></div>
<div class="b " style="left:1455px;top:819px;width:17px;height:51px;background:#dde1e6;"></div>
<svg class="b" style="left:1460.5px;top:822.5px;" width="7" height="8" viewBox="0 0 7 8"><path d="M0 3.500L3.500 0 7 3.500zM0 7.500L3.500 4 7 7.500z" fill="#3f444c"/></svg>
<svg class="b" style="left:1460px;top:839.5px;" width="8" height="8" viewBox="0 0 8 8"><circle cx="4" cy="4" r="3" fill="#e6e9ed" stroke="#5a606a" stroke-width="1"/></svg>
<svg class="b" style="left:1460.5px;top:857px;" width="7" height="8" viewBox="0 0 7 8"><path d="M0 .5L3.500 4 7 .5zM0 4.500L3.500 8 7 4.500z" fill="#3f444c"/></svg>
<div class="b " style="left:1455px;top:165px;width:17px;height:4px;background:linear-gradient(#868d97 0,#9aa0a9 1px,#b3b8bf 2px,rgba(190,195,201,.6) 3px,rgba(200,204,210,0) 4px);"></div>
<div class="b" id="status"></div>
<span class="t " style="left:40.0px;top:876px;font-size:11.5px;color:#2d2d2d;letter-spacing:-0.158px;">Страница: 1 из 1</span>
<span class="t " style="left:147.0px;top:876px;font-size:11.5px;color:#2d2d2d;letter-spacing:-0.344px;">Число слов: 0</span>
<span class="t " style="left:269.0px;top:876px;font-size:11.5px;color:#2d2d2d;letter-spacing:-0.042px;">русский</span>
<div class="b " style="left:137px;top:872px;width:1px;height:19px;background:#a9afb8;"></div>
<div class="b " style="left:138px;top:872px;width:1px;height:19px;background:#f6f7f9;"></div>
<div class="b " style="left:227px;top:872px;width:1px;height:19px;background:#a9afb8;"></div>
<div class="b " style="left:228px;top:872px;width:1px;height:19px;background:#f6f7f9;"></div>
<div class="b " style="left:320px;top:872px;width:1px;height:19px;background:#a9afb8;"></div>
<div class="b " style="left:321px;top:872px;width:1px;height:19px;background:#f6f7f9;"></div>
<div class="b " style="left:1194px;top:872px;width:1px;height:19px;background:#a9afb8;"></div>
<div class="b " style="left:1195px;top:872px;width:1px;height:19px;background:#f6f7f9;"></div>
<svg class="b" style="left:235px;top:872px;" width="18" height="17" viewBox="0 0 18 17"><path d="M1 10.500l6-3.500 7.500 3-6 4z" fill="#f4f6fa" stroke="#5f7fb8" stroke-width=".9"/><path d="M1 10.500v1.800l7.500 4 6-4v-2.300" fill="#dfe6f3" stroke="#5f7fb8" stroke-width=".8"/>
<path d="M7.500 5.500l2.500 3.500 6-8" fill="none" stroke="#2c5fc0" stroke-width="1.800"/></svg>
<div class="b" id="vsel"></div>
<svg class="b" style="left:1203px;top:876px;" width="11" height="11" viewBox="0 0 11 11"><rect x=".5" y=".5" width="10" height="10" fill="#fff" stroke="#4a4f58" stroke-width="1"/><path d="M2.500 2.500h6M2.500 4.500h6M2.500 6.500h6M2.500 8.500h6" stroke="#3f444c" stroke-width="1"/></svg>
<svg class="b" style="left:1221px;top:875px;" width="13" height="12" viewBox="0 0 13 12"><path d="M6.500 2C5 1 3 .8 .8 1.200v8.600c2.200-.4 4.200-.2 5.700.8 1.500-1 3.500-1.200 5.700-.8V1.200C10 .8 8 1 6.500 2z" fill="#f5f6f8" stroke="#555b66" stroke-width=".9"/><path d="M6.500 2v8.600" stroke="#555b66" stroke-width=".9"/><path d="M2.300 3.500h2.800M2.300 5.500h2.800M2.300 7.500h2.800M8 3.500h2.800M8 5.500h2.800M8 7.500h2.800" stroke="#7a808a" stroke-width=".7"/></svg>
<svg class="b" style="left:1239px;top:875px;" width="13" height="13" viewBox="0 0 13 13"><rect x=".5" y=".5" width="9" height="8" fill="#fbfbfc" stroke="#555b66" stroke-width="1"/><path d="M2 2.500h6.500M2 4.500h6.500M2 6.500h4" stroke="#5f656f" stroke-width="1"/><circle cx="9" cy="9.300" r="3.200" fill="#3f86d3" stroke="#1e4f94" stroke-width=".7"/><path d="M7.500 8.500c1 .6 1.800-.6 2.800.3M8 11c.6-.7 1.500-.4 2.200-1" stroke="#5fc06a" stroke-width="1" fill="none"/></svg>
<svg class="b" style="left:1258px;top:876px;" width="11" height="11" viewBox="0 0 11 11"><path d="M.5 1.500h3M3.500 3.500h7M3.500 5.500h5M5.500 7.500h5M.5 9.500h3M5.500 9.500h4" stroke="#6a707a" stroke-width="1"/></svg>
<svg class="b" style="left:1276px;top:876px;" width="12" height="11" viewBox="0 0 12 11"><path d="M.5 1.500h11M.5 3.500h11M.5 5.500h11M.5 7.500h11M.5 9.500h11" stroke="#555b66" stroke-width="1"/></svg>
<span class="t " style="left:1300.0px;top:876px;font-size:11.5px;color:#2d2d2d;letter-spacing:-0.458px;">100%</span>
<div class="b zc" style="left:1336px;top:873px;width:16px;height:16px;"></div>
<div class="b zc" style="left:1452px;top:873px;width:16px;height:16px;"></div>
<div class="b " style="left:1340px;top:880px;width:8px;height:2px;background:#3f444c;"></div>
<div class="b " style="left:1456px;top:880px;width:8px;height:2px;background:#3f444c;"></div>
<div class="b " style="left:1459px;top:877px;width:2px;height:8px;background:#3f444c;"></div>
<div class="b " style="left:1353px;top:880px;width:99px;height:1px;background:#9aa1ab;"></div>
<div class="b " style="left:1353px;top:881px;width:99px;height:1px;background:#f3f5f7;"></div>
<svg class="b" style="left:1397px;top:873px;" width="11" height="15" viewBox="0 0 11 15"><path d="M.8 .8h9.400v8.200l-4.700 5-4.700-5z" fill="#f3f4f6" stroke="#7f8792" stroke-width="1"/></svg>
<div class="b" id="task"></div>
<div class="b" id="orb"><i></i></div>
<svg class="b" style="left:45px;top:897px;" width="30" height="30" viewBox="0 0 23.500 25"><path d="M5 6.500c2.500-1.300 4.800-1.300 7 0l-1.600 6c-2.200-1.200-4.500-1.200-7 0z" fill="#e8502a"/>
<path d="M13.300 7c2.300 1.300 4.700 1.300 7.200 0l-1.600 6c-2.500 1.300-5 1.300-7.200 0z" fill="#7fbf3f"/>
<path d="M3 13.800c2.500-1.300 4.800-1.200 7 0l-1.600 6c-2.200-1.200-4.500-1.300-7 0z" fill="#3f9fe8"/>
<path d="M11.300 14.300c2.300 1.300 4.700 1.300 7.200 0l-1.600 6c-2.500 1.300-5 1.300-7.200 0z" fill="#f7c12a"/></svg>
<svg class="b" style="left:102px;top:893px;" width="38" height="37" viewBox="0 0 38 37"><defs><linearGradient id="ie" x1="0" y1="0" x2="0" y2="1"><stop offset="0" stop-color="#7fd4fb"/><stop offset=".5" stop-color="#2fa2ec"/><stop offset="1" stop-color="#1b78d0"/></linearGradient></defs>
<path d="M33.500 21.500H14.200c.4 3.300 2.800 5.300 6.300 5.300 2.700 0 4.700-1.100 5.900-3h6.400c-1.700 5.300-6.300 8.700-12.300 8.700C12.600 32.500 7.500 27.300 7.500 20c0-7.400 5.200-12.700 12.900-12.700 8 0 13.300 5.600 13.100 14.200zM14.400 17.200h12.400c-.6-2.900-2.900-4.700-6.200-4.700-3.300 0-5.500 1.800-6.200 4.700z" fill="url(#ie)" stroke="#1560b0" stroke-width=".7"/>
<path d="M30.500 8.500c2.300-2.600 2.400-5 .3-5.600C26.800 1.800 16 7.200 8.800 16.500 3.500 23.400 1.800 29.800 5.200 32c2 1.200 5.300.2 8.800-2" fill="none" stroke="#f6c21c" stroke-width="2.300" stroke-linecap="round"/></svg>
<div class="b tb" style="left:154px;top:893px;width:58px;height:38px;"></div>
<svg class="b" style="left:165px;top:896px;" width="38" height="34" viewBox="0 0 38 34"><defs><linearGradient id="fo" x1="0" y1="0" x2="0" y2="1"><stop offset="0" stop-color="#fbe7a9"/><stop offset="1" stop-color="#eec766"/></linearGradient></defs>
<path d="M2 5h10l2 2h14v18H2z" fill="#e9c873"/>
<path d="M3 3.500h10l1.500 2h7v3h8.500v19.500H3z" fill="url(#fo)" stroke="#d7b057" stroke-width=".8"/>
<path d="M4.500 3h8v2.500h-8zM13.500 5h8v3h-8zM21 8h8v2.500h-8z" fill="#fffdf3"/><path d="M5 3h3.500v2H5z" fill="#2fa84f"/><path d="M14 5h3.500v2H14z" fill="#d8362a"/><path d="M21.500 8h3.500v2h-3.500z" fill="#2f9fe0"/><path d="M6 20c0-2.500 1.500-4 4-4h13c2.500 0 4 1.500 4 4v10h-5.500v-7.500h-10V30H6z" fill="#8cc4ee" stroke="#4e93cf" stroke-width="1"/><path d="M7.500 19.500c.3-1.500 1.300-2.200 3-2.200h12.500" stroke="#dff1ff" stroke-width="1.300" fill="none"/></svg>
<svg class="b" style="left:229px;top:899px;" width="30" height="29" viewBox="0 0 30 29"><rect x="6" y="3" width="21" height="22" fill="#6f9fd6"/><rect x="4" y="2.200" width="21" height="23.500" fill="#86b3e3"/>
<rect x="1.500" y="1.500" width="21" height="25" fill="#9cc3ec" stroke="#5f92cf" stroke-width=".8"/>
<circle cx="11.500" cy="13.500" r="8.600" fill="#f28a1c" stroke="#f7b25a" stroke-width="1"/><path d="M8.300 8.300l8.500 5.200-8.500 5.200z" fill="#fff"/></svg>
<div class="b tb" style="left:278px;top:893px;width:58px;height:38px;"></div>
<svg class="b" style="left:292px;top:895px;" width="30" height="34" viewBox="0 0 30 34"><path d="M7 3.500L9.500 1h11L23 3.500l3 .5 2 4.500-1.500 3.500L25 22c-1 3-3.500 6-10 11-6.500-5-9-8-10-11L3.500 12 2 8.500 4 4z" fill="#fb542b"/>
<path d="M15 1h5.500L23 3.500l3 .5 2 4.500-1.500 3.500L25 22c-1 3-3.500 6-10 11z" fill="#f0401c" opacity=".55"/>
<path d="M9.500 6.500h3.500l2 1 2-1h3.500l3 3.500-1.500 3 .8 2.500-3.300 3.500 1 2.500-3.500 2.500-2 1.800-2-1.800-3.500-2.500 1-2.500L7.200 15.500 8 13 6.500 10z" fill="#fff"/>
<path d="M10 11l3.200 1.200-.5 1.600zM20 11l-3.200 1.200.5 1.600zM13.300 16l1.700 1.500 1.700-1.500.6 3-2.300 1.700-2.300-1.700z" fill="#fb542b"/></svg>
<div class="b tba" style="left:340px;top:893px;width:53px;height:38px;"></div>
<div class="b " style="left:394px;top:893px;width:4px;height:38px;border:1px solid #9a9ea4;border-left:none;border-radius:0 3px 3px 0;background:linear-gradient(#7d8186,#4c5055);"></div>
<svg class="b" style="left:349px;top:895px;" width="33" height="32" viewBox="0 0 33 32"><defs><linearGradient id="wd" x1="0" y1="0" x2="1" y2="1"><stop offset="0" stop-color="#cfe2f7"/><stop offset=".45" stop-color="#ffffff"/><stop offset="1" stop-color="#dbe7f5"/></linearGradient></defs>
<path d="M1.500 6.500c0-3 2-5 5-5h23.500v28H1.500z" fill="url(#wd)" stroke="#2b5daa" stroke-width="1.400"/>
<path d="M4.500 5.500h5l2.600 11 3-11h3.800l3 11 2.600-11h4.800L24.500 24h-4.600L17 13.500 14.100 24H9.500z" fill="#1f5cb3"/>
<path d="M14 21.500l17.500-4.500 1 8-8 5.500-10.500-3z" fill="#f4f7fb" stroke="#c6d1e0" stroke-width=".6"/><path d="M16 23.500l13-3.200M16.500 25.800l11-2.500" stroke="#c3cfdf" stroke-width=".8"/></svg>
<span class="t " style="left:1210.0px;top:904px;font-size:12px;color:#f2f2f2;letter-spacing:-1.375px;">RU</span>
<svg class="b" style="left:1241px;top:911px;" width="8" height="5" viewBox="0 0 8 5"><path d="M0 4.500L4 .3 8 4.500z" fill="#f2f2f2"/></svg>
<svg class="b" style="left:1262px;top:904px;" width="18" height="18" viewBox="0 0 18 18"><path d="M2 1v15.500" stroke="#f2f2f2" stroke-width="1.600"/><path d="M3.500 2c2.500-1.200 4 .8 6.500.3 1-.2 2-.6 3-.9v7c-1 .4-2 .8-3 1-2.500.5-4-1.500-6.500-.3z" fill="#f2f2f2"/><circle cx="12" cy="12.500" r="4.300" fill="#e02a1f" stroke="#fff" stroke-width=".6"/><path d="M10.200 10.700l3.600 3.600M13.800 10.700l-3.600 3.600" stroke="#fff" stroke-width="1.400"/></svg>
<svg class="b" style="left:1286px;top:905px;" width="17" height="15" viewBox="0 0 17 15"><ellipse cx="8.500" cy="7.500" rx="7.300" ry="4.800" transform="rotate(-25 8.500 7.500)" fill="none" stroke="#f2f2f2" stroke-width="1.600"/><path d="M3 11c3-.5 6.500-3 9.500-7" stroke="#f2f2f2" stroke-width="2.400" fill="none"/></svg>
<svg class="b" style="left:1310px;top:904px;" width="17" height="19" viewBox="0 0 17 19"><path d="M5 1v4M10.500 1v4" stroke="#f2f2f2" stroke-width="1.600"/><path d="M2.500 5h10.500v4c0 2-1.500 3.500-3.500 3.800V17h-3v-4.200C4.500 12.500 2.500 11 2.500 9z" fill="#f2f2f2"/><rect x="11" y="5" width="4" height="9" rx="1" fill="none" stroke="#f2f2f2" stroke-width="1.200"/><path d="M3 10l7 7M10 10l-7 7" stroke="#e02a1f" stroke-width="1.800"/></svg>
<svg class="b" style="left:1334px;top:904px;" width="17" height="18" viewBox="0 0 17 18"><path d="M2 1v5h4.500V1M3.200 1v3M5.300 1v3M4.200 6v8h3" fill="none" stroke="#f2f2f2" stroke-width="1.300"/><rect x="6.500" y="5" width="9" height="7.500" fill="none" stroke="#f2f2f2" stroke-width="1.500"/><path d="M8 15.500h6M11 12.500v3" stroke="#f2f2f2" stroke-width="1.500"/></svg>
<svg class="b" style="left:1357px;top:904px;" width="17" height="17" viewBox="0 0 17 17"><path d="M1.500 6h3l4-4v13l-4-4h-3z" fill="#f2f2f2"/><path d="M10.500 5.500c1.300 1.800 1.300 4.200 0 6M12.800 3.500c2.300 3 2.300 7 0 10" fill="none" stroke="#d8d8d8" stroke-width="1.100"/></svg>
<span class="t " style="left:1405.0px;top:899px;font-size:12px;color:#f2f2f2;letter-spacing:-0.500px;">16:09</span>
<span class="t " style="left:1391.0px;top:916px;font-size:12px;color:#f2f2f2;letter-spacing:-0.556px;">14.06.2021</span>
<div class="b " style="left:1459px;top:893px;width:13px;height:38px;border:1px solid #6f757d;border-right:none;background:linear-gradient(135deg,#5c6167 0,#2b2f34 30%,#0b0e12 31%,#0d1014 100%);"></div>
</body></html>
